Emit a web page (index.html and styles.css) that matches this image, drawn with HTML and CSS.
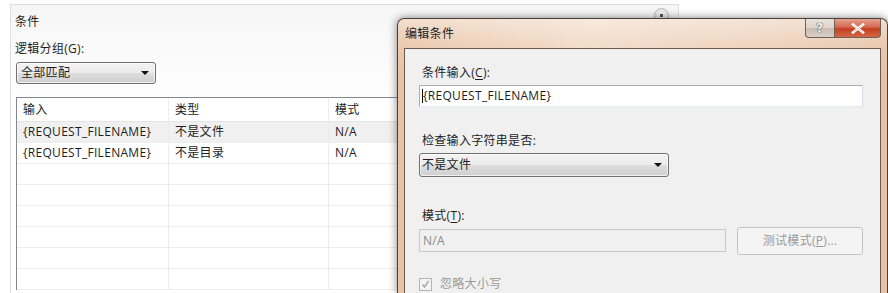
FILE: index.html
```html
<!DOCTYPE html>
<html lang="zh-CN">
    <head>
        <meta charset="utf-8">
        <title>编辑条件</title>
        <link rel="stylesheet" href="styles.css">
    </head>
    <body>
        <div class="panel">
            <div class="panel-title">
                <span>条件</span>
                <span class="collapse"></span>
            </div>
            <div class="label">逻辑分组(G):</div>
            <div class="combo combo-group">
                <span>全部匹配</span>
                <span class="arrow"></span>
            </div>

            <div class="list">
                <div class="list-row list-head">
                    <div class="cell">输入</div>
                    <div class="cell">类型</div>
                    <div class="cell">模式</div>
                </div>
                <div class="list-row selected">
                    <div class="cell">{REQUEST_FILENAME}</div>
                    <div class="cell">不是文件</div>
                    <div class="cell">N/A</div>
                </div>
                <div class="list-row">
                    <div class="cell">{REQUEST_FILENAME}</div>
                    <div class="cell">不是目录</div>
                    <div class="cell">N/A</div>
                </div>
                <div class="list-row"><div class="cell"></div><div class="cell"></div><div class="cell"></div></div>
                <div class="list-row"><div class="cell"></div><div class="cell"></div><div class="cell"></div></div>
                <div class="list-row"><div class="cell"></div><div class="cell"></div><div class="cell"></div></div>
                <div class="list-row"><div class="cell"></div><div class="cell"></div><div class="cell"></div></div>
                <div class="list-row"><div class="cell"></div><div class="cell"></div><div class="cell"></div></div>
                <div class="list-row"><div class="cell"></div><div class="cell"></div><div class="cell"></div></div>
            </div>
        </div>

        <!-- the modal window sits on top of the panel -->
        <div class="dialog">
            <div class="titlebar">
                <span class="title">编辑条件</span>
                <div class="caption-buttons">
                    <span class="cap-btn cap-help">?</span>
                    <span class="cap-btn cap-close">
                        <svg width="14" height="11" viewBox="0 0 14 11">
                            <path d="M2 1.5 L12 9.5 M12 1.5 L2 9.5" stroke="#fff" stroke-width="2.6" stroke-linecap="square"/>
                            <path d="M2 1.5 L12 9.5 M12 1.5 L2 9.5" stroke="#6b2a1e" stroke-width="0.6" opacity="0.35"/>
                        </svg>
                    </span>
                </div>
            </div>

            <div class="client">
                <div class="field-label">条件输入(<u>C</u>):</div>
                <div class="textbox textbox-input"><span class="caret"></span>{REQUEST_FILENAME}</div>

                <div class="field-label label-check">检查输入字符串是否:</div>
                <div class="combo combo-type">
                    <span>不是文件</span>
                    <span class="arrow"></span>
                </div>

                <div class="field-label label-pattern">模式(<u>T</u>):</div>
                <div class="pattern-row">
                    <div class="textbox textbox-disabled">N/A</div>
                    <div class="button-disabled">测试模式(<u>P</u>)...</div>
                </div>

                <div class="check-row">
                    <span class="checkbox">
                        <svg width="9" height="9" viewBox="0 0 9 9">
                            <path d="M1.5 4.5 L3.5 7 L7.5 1" fill="none" stroke="#a8a8a8" stroke-width="1.4"/>
                        </svg>
                    </span>
                    <span class="check-text">忽略大小写</span>
                </div>
            </div>
        </div>
    </body>
</html>
```

FILE: styles.css
```css
* {
    margin: 0;
    padding: 0;
    box-sizing: border-box;
}

html, body {
    width: 888px;
    height: 293px;
    overflow: hidden;
}

body {
    position: relative;
    background-color: #ffffff;
    font-family: "Open Sans", "Noto Sans CJK SC", sans-serif;
    font-size: 12px;
    line-height: 16px;
    letter-spacing: 0.3px;
    color: #1e1e1e;
}

/* background panel */
.panel {
    margin: 4px 0 0 10px;
    width: 669px;
    height: 289px;
    overflow: hidden;
    border: 1px solid #dedede;
    border-bottom: none;
    background: linear-gradient(180deg, #f6f6f6 0, #fbfbfb 60px, #ffffff 120px);
    padding: 9px 0 0 5px;
}

.panel-title {
    display: flex;
    justify-content: space-between;
    margin-left: -1px;
    padding-right: 9px;
    height: 16px;
}

.collapse {
    width: 15px;
    height: 15px;
    margin-top: -6px;
    border-radius: 50%;
    border: 1px solid #b8b8b8;
    background: radial-gradient(circle, #555 0, #555 1.5px, #f4f4f4 2px, #e2e2e2 100%);
}

.label {
    margin-top: 11px;
    margin-left: -1px;
}

.combo {
    display: flex;
    align-items: center;
    justify-content: space-between;
    border: 1px solid #707070;
    border-radius: 3px;
    background: linear-gradient(180deg, #f3f3f3 0, #ebebeb 50%, #dddddd 51%, #cfcfcf 100%);
    padding: 0 6px 0 4px;
    box-shadow: inset 0 0 0 1px rgba(255, 255, 255, 0.7);
}

.combo-group {
    margin-top: 5px;
    width: 140px;
    height: 22px;
}

.arrow {
    width: 0;
    height: 0;
    border-left: 4px solid transparent;
    border-right: 4px solid transparent;
    border-top: 4px solid #111;
}

/* condition list */
.list {
    margin-top: 13px;
    width: 700px;
    border-left: 1px solid #828790;
    border-top: 1px solid #828790;
    background: #ffffff;
}

.list-row {
    display: grid;
    grid-template-columns: 152px 160px 1fr;
    height: 21px;
    border-bottom: 1px solid #ededed;
}

.list-head {
    height: 24px;
    border-bottom: 1px solid #e4e4e4;
}

.list-head .cell {
    line-height: 23px;
}

.selected {
    background: #f0f0f0;
}

.cell {
    padding-left: 6px;
    line-height: 20px;
    border-right: 1px solid #ececec;
    white-space: nowrap;
}

/* edit dialog */
.dialog {
    position: absolute;
    left: 397px;
    top: 18px;
    width: 491px;
    height: 275px;
    display: flex;
    flex-direction: column;
    border: 1px solid #4a3f38;
    border-bottom: none;
    border-radius: 7px 7px 0 0;
    padding: 0 6px;
    background:
        linear-gradient(180deg, rgba(255, 255, 255, 0.45) 0, rgba(255, 255, 255, 0.1) 30px, rgba(255, 255, 255, 0) 60px),
        linear-gradient(90deg, #e8c2a4 0, #f1d8c4 40%, #ecceb6 75%, #e7c1a3 100%);
    box-shadow: 0 0 9px rgba(0, 0, 0, 0.5);
}

.titlebar {
    display: flex;
    justify-content: space-between;
    height: 29px;
    flex: none;
}

.title {
    margin-left: 1px;
    line-height: 29px;
    color: #222;
}

.caption-buttons {
    display: flex;
    height: 19px;
}

.cap-btn {
    display: flex;
    align-items: center;
    justify-content: center;
    height: 19px;
    border: 1px solid #6f5f55;
    border-top: none;
}

.cap-help {
    width: 29px;
    border-right: none;
    border-radius: 0 0 0 4px;
    background: linear-gradient(180deg, #eae3dd 0, #ddd3cb 50%, #c8bcb2 51%, #d8cfc7 100%);
    font-family: "DejaVu Sans", sans-serif;
    font-weight: bold;
    font-size: 13px;
    color: #f4f4f4;
    text-shadow: 0 0 1px #333, 0 0 1px #333;
}

.cap-close {
    width: 47px;
    border-radius: 0 0 4px 0;
    background: linear-gradient(180deg, #e6a291 0, #d6684f 45%, #c4401f 55%, #d3664a 100%);
}

.client {
    flex: 1;
    overflow: hidden;
    border: 1px solid #6e5a4c;
    border-bottom: none;
    background: #f0f0f0;
    padding: 16px 17px 0 14px;
}

.field-label {
    padding-left: 3px;
    height: 16px;
}

.field-label u {
    text-underline-offset: 2px;
}

.textbox {
    height: 22px;
    margin-top: 4px;
    border: 1px solid #abadb3;
    border-right-color: #dbdfe6;
    border-bottom-color: #e3e9ef;
    background: #ffffff;
    line-height: 20px;
    padding-left: 2px;
    display: flex;
    align-items: center;
    white-space: nowrap;
}

.caret {
    width: 1px;
    height: 14px;
    background: #000;
}

.label-check {
    margin-top: 26px;
}

.combo-type {
    margin-top: 4px;
    width: 250px;
    height: 24px;
    padding-left: 2px;
}

.label-pattern {
    margin-top: 31px;
}

.pattern-row {
    display: flex;
    align-items: flex-start;
    margin-top: 3px;
    gap: 11px;
}

.textbox-disabled {
    width: 308px;
    height: 23px;
    margin-top: 2px;
    background: #f0f0f0;
    border-color: #c9c9c9;
    color: #8a8a8a;
    padding-left: 3px;
}

.button-disabled {
    width: 126px;
    height: 28px;
    border: 1px solid #c4c4c4;
    border-radius: 3px;
    background: #f4f4f4;
    color: #9a9a9a;
    text-align: center;
    line-height: 26px;
}

.check-row {
    display: flex;
    align-items: center;
    margin-top: 21px;
    gap: 8px;
}

.checkbox {
    display: flex;
    align-items: center;
    justify-content: center;
    width: 13px;
    height: 13px;
    border: 1px solid #b4b4b4;
    background: #f4f4f4;
}

.check-text {
    color: #9a9a9a;
}
```
